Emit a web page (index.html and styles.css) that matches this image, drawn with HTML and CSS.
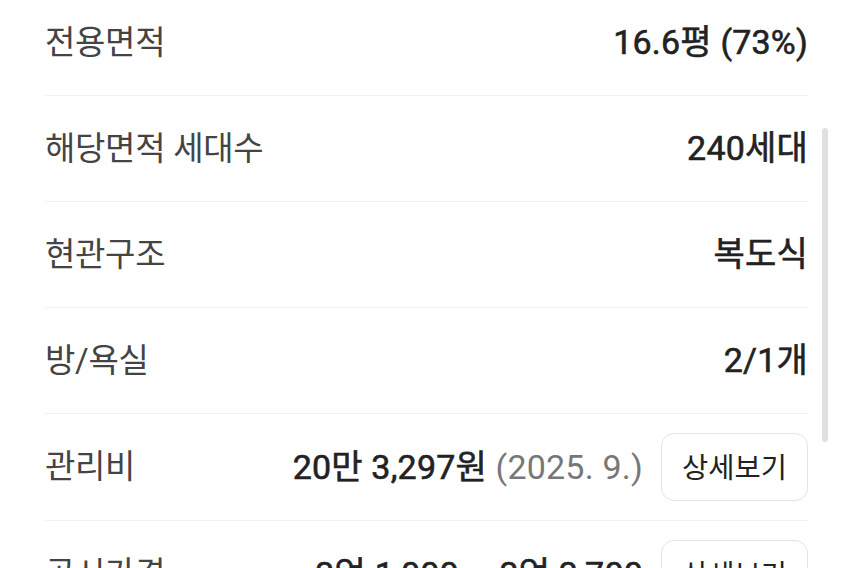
FILE: index.html
```
<!DOCTYPE html>
<html lang="ko">
<head>
<meta charset="utf-8">
<link rel="stylesheet" href="styles.css">
</head>
<body>
<div class="page">
  <ul class="info">
    <li class="row"><span class="label">전용면적</span><span class="value">16.6평 (73%)</span></li>
    <li class="row"><span class="label">해당면적 세대수</span><span class="value">240세대</span></li>
    <li class="row"><span class="label">현관구조</span><span class="value">복도식</span></li>
    <li class="row"><span class="label">방/욕실</span><span class="value">2/1개</span></li>
    <li class="row tall"><span class="label">관리비</span><span class="right"><span class="value">20만 3,297원 <span class="sub">(2025. 9.)</span></span><button class="btn">상세보기</button></span></li>
    <li class="row tall"><span class="label">공시가격</span><span class="right"><span class="value">3억 1,000 ~ 3억 3,700</span><button class="btn">상세보기</button></span></li>
  </ul>
  <div class="scrollbar"></div>
</div>
</body>
</html>
```
FILE: styles.css
```
html, body {
  margin: 0;
  padding: 0;
  background: #ffffff;
  overflow: hidden;
}
body {
  font-family: Roboto, "Noto Sans CJK KR", sans-serif;
  width: 852px;
  height: 568px;
}
.page {
  position: relative;
  height: 568px;
  overflow: hidden;
}
.info {
  list-style: none;
  margin: -10px 0 0 0;
  padding: 0 44px 0 45px;
}
.row {
  display: flex;
  align-items: center;
  justify-content: space-between;
  box-sizing: border-box;
  height: 106px;
  padding-bottom: 6px;
  border-bottom: 1px solid #f1f1f1;
}
.row.tall {
  height: 107px;
}
.label {
  font-size: 33px;
  color: #444444;
  font-weight: 400;
  letter-spacing: -0.3px;
}
.value {
  font-size: 34px;
  color: #222222;
  font-weight: 400;
  -webkit-text-stroke: 0.6px #222222;
  letter-spacing: 0.2px;
}
.sub {
  color: #777777;
  -webkit-text-stroke: 0;
}
.right {
  display: flex;
  align-items: center;
  gap: 18px;
}
.btn {
  width: 147px;
  height: 68px;
  margin-top: 6px;
  border: 1.5px solid #e4e4e4;
  border-radius: 13px;
  background: #ffffff;
  font-family: Roboto, "Noto Sans CJK KR", sans-serif;
  font-size: 28.5px;
  color: #222222;
  font-weight: 400;
  padding: 0 0 4px 0;
}
.scrollbar {
  position: absolute;
  left: 822px;
  top: 128px;
  width: 6px;
  height: 314px;
  border-radius: 3px;
  background: #e0e0e0;
}
```
